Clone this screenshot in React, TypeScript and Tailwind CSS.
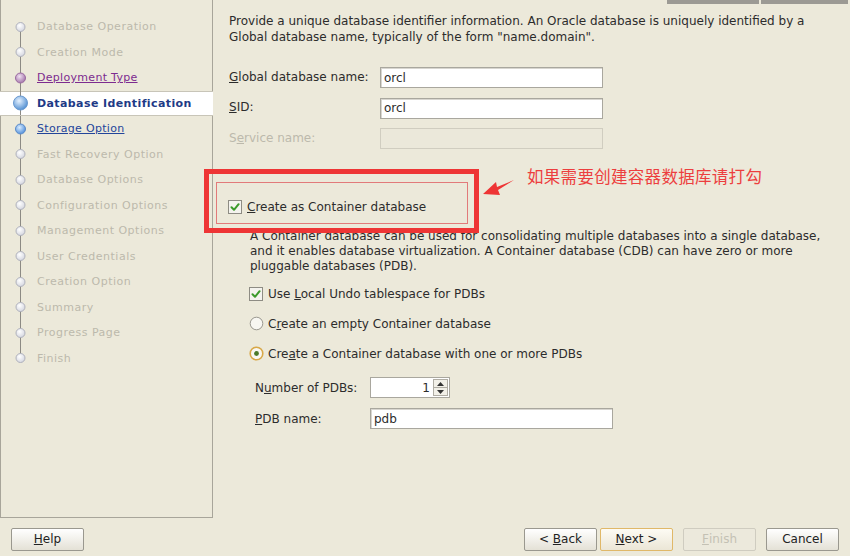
import React from "react";

const steps: { label: string; state: "done" | "current" | "next" | "off" }[] = [
  { label: "Database Operation", state: "off" },
  { label: "Creation Mode", state: "off" },
  { label: "Deployment Type", state: "done" },
  { label: "Database Identification", state: "current" },
  { label: "Storage Option", state: "next" },
  { label: "Fast Recovery Option", state: "off" },
  { label: "Database Options", state: "off" },
  { label: "Configuration Options", state: "off" },
  { label: "Management Options", state: "off" },
  { label: "User Credentials", state: "off" },
  { label: "Creation Option", state: "off" },
  { label: "Summary", state: "off" },
  { label: "Progress Page", state: "off" },
  { label: "Finish", state: "off" },
];

function Marker({ state, first, last, h }: { state: string; first: boolean; last: boolean; h: number }) {
  const cy = h / 2;
  const cfg =
    state === "current"
      ? { r: 7, a: "#e6f2ff", b: "#4a8ad0", s: "#6a9ad0" }
      : state === "next"
      ? { r: 5, a: "#d8ecff", b: "#4a8ad8", s: "#5a8ac8" }
      : state === "done"
      ? { r: 5, a: "#f0e0f0", b: "#a070a8", s: "#9a6aa0" }
      : { r: 4.5, a: "#ffffff", b: "#d2d4de", s: "#b0b2bc" };
  const gid = `g-${state}`;
  return (
    <svg width="37" height={h} viewBox={`0 0 37 ${h}`} className="block shrink-0">
      <defs>
        <radialGradient id={gid} cx="0.4" cy="0.35" r="0.7">
          <stop offset="0" stopColor={cfg.a} />
          <stop offset="1" stopColor={cfg.b} />
        </radialGradient>
      </defs>
      <line x1="20.5" x2="20.5" y1={first ? cy : -2} y2={last ? cy : h + 2} stroke="#8c8a84" strokeWidth="1" />
      <circle cx="20.5" cy={cy} r={cfg.r} fill={`url(#${gid})`} stroke={cfg.s} strokeWidth="1" />
    </svg>
  );
}

function Step({ label, state, first, last }: { label: string; state: string; first: boolean; last: boolean }) {
  const cur = state === "current";
  const textCls =
    state === "current"
      ? "font-bold text-[#1e3a86] tracking-[0.4px]"
      : state === "done"
      ? "underline text-[#7d2b8f] tracking-[0.3px]"
      : state === "next"
      ? "underline text-[#23459a] tracking-[0.3px]"
      : "text-[#bcb9ac] tracking-[0.5px]";
  return (
    <div
      className={`flex items-center h-[25.5px] -ml-[1px] ${
        cur ? "bg-white border-y border-[#c8c5b8] -mr-[1px]" : ""
      }`}
    >
      <Marker state={state} first={first} last={last} h={cur ? 24 : 26} />
      <span className={`text-[11px] leading-none ${textCls}`}>{label}</span>
    </div>
  );
}

function TextBox({ value, disabled, w = "w-[223px]" }: { value?: string; disabled?: boolean; w?: string }) {
  return (
    <div
      className={`${w} h-[21px] flex items-center px-[3px] text-[12px] border ${
        disabled
          ? "bg-[#ebe8da] border-[#d0cdc0]"
          : "bg-white border-[#a9a79e] shadow-[inset_1px_1px_0_#d8d6d0]"
      }`}
    >
      {value}
    </div>
  );
}

function Check() {
  return (
    <div className="w-[14px] h-[14px] border border-[#8e8c84] bg-[#f4f3ee] flex items-center justify-center shrink-0">
      <svg width="10" height="10" viewBox="0 0 10 10">
        <path d="M1.5 5.2 L4 7.8 L8.6 2.2" fill="none" stroke="#3b9a2a" strokeWidth="2" strokeLinecap="round" strokeLinejoin="round" />
      </svg>
    </div>
  );
}

function Radio({ on }: { on?: boolean }) {
  return (
    <svg width="15" height="15" viewBox="0 0 15 15" className="shrink-0">
      <circle cx="7.5" cy="7.5" r="6.3" fill="#f8f7f2" stroke={on ? "#d8a848" : "#9a9890"} strokeWidth={on ? 1.6 : 1} />
      {on && <circle cx="7.5" cy="7.5" r="2.4" fill="#4a7a2a" />}
    </svg>
  );
}

function Btn({ children, primary, disabled, w = "w-[73px]" }: { children: React.ReactNode; primary?: boolean; disabled?: boolean; w?: string }) {
  return (
    <div
      className={`${w} h-[23px] flex items-center justify-center text-[12px] rounded-[2px] border ${
        disabled
          ? "border-[#cfccc0] text-[#c4c1b4] bg-[#ece9dc]"
          : primary
          ? "border-[#e0b868] bg-gradient-to-b from-[#fdfbf4] to-[#ebe6d6] text-[#222]"
          : "border-[#9a988f] bg-gradient-to-b from-[#ffffff] to-[#e4e1d6] text-[#222]"
      }`}
    >
      {children}
    </div>
  );
}

export default function App() {
  return (
    <div
      className="relative w-[850px] h-[556px] overflow-hidden bg-[#ece9da] text-[#2c2c2c]"
      style={{ fontFamily: '"DejaVu Sans", Verdana, sans-serif' }}
    >
      <div className="flex h-[518px]">
        <div className="w-[213px] h-full border-l border-r border-b border-[#a8a59a] flex flex-col pt-[14px] shrink-0">
          {steps.map((s, i) => (
            <Step key={s.label} label={s.label} state={s.state} first={i === 0} last={i === steps.length - 1} />
          ))}
        </div>
        <div className="flex-1 flex flex-col text-[12px]">
          <div className="flex h-[4px] justify-end">
            <div className="w-[92px] bg-[#9c9a94] mr-[2px]" />
            <div className="w-[87px] bg-[#9c9a94] mr-[2px]" />
          </div>
          <div className="pl-[16px] pt-[9px] leading-[16px]">
            <p>Provide a unique database identifier information. An Oracle database is uniquely identified by a</p>
            <p>Global database name, typically of the form "name.domain".</p>
          </div>
          <div className="pl-[16px] mt-[22px] flex flex-col gap-[9.5px]">
            <div className="flex items-center h-[21px]">
              <span className="w-[151px] -mt-[2px]">
                <u>G</u>lobal database name:
              </span>
              <TextBox value="orcl" />
            </div>
            <div className="flex items-center h-[21px]">
              <span className="w-[151px] -mt-[2px]">
                <u>S</u>ID:
              </span>
              <TextBox value="orcl" />
            </div>
            <div className="flex items-center h-[21px]">
              <span className="w-[151px] -mt-[2px] text-[#bcb9ac]">
                S<u>e</u>rvice name:
              </span>
              <TextBox disabled />
            </div>
          </div>
          <div className="pl-[15px] mt-[50px] h-[16px] flex items-center gap-[5px]">
            <Check />
            <span>
              <u>C</u>reate as Container database
            </span>
          </div>
          <div className="pl-[37px] mt-[13.5px] leading-[15px]">
            <p>A Container database can be used for consolidating multiple databases into a single database,</p>
            <p>and it enables database virtualization. A Container database (CDB) can have zero or more</p>
            <p>pluggable databases (PDB).</p>
          </div>
          <div className="pl-[36px] mt-[12.5px] flex flex-col gap-[13.75px]">
            <div className="flex items-center h-[16px] gap-[5px]">
              <Check />
              <span>
                Use <u>L</u>ocal Undo tablespace for PDBs
              </span>
            </div>
            <div className="flex items-center h-[16px] gap-[4px]">
              <Radio />
              <span>
                C<u>r</u>eate an empty Container database
              </span>
            </div>
            <div className="flex items-center h-[16px] gap-[4px]">
              <Radio on />
              <span>
                Cre<u>a</u>te a Container database with one or more PDBs
              </span>
            </div>
          </div>
          <div className="pl-[42px] mt-[15.5px] flex flex-col gap-[10px]">
            <div className="flex items-center h-[21px]">
              <span className="w-[115px]">
                N<u>u</u>mber of PDBs:
              </span>
              <div className="w-[80px] h-[21px] flex items-center bg-white border border-[#a9a79e]">
                <span className="flex-1 text-right pr-[3px]">1</span>
                <div className="w-[15px] h-[17px] mr-[1px] flex flex-col border border-[#b0ada4] bg-[#f2f0e8]">
                  <div className="flex-1 flex items-center justify-center border-b border-[#b0ada4]">
                    <svg width="7" height="4" viewBox="0 0 7 4"><path d="M0 4 L3.5 0 L7 4 Z" fill="#333" /></svg>
                  </div>
                  <div className="flex-1 flex items-center justify-center">
                    <svg width="7" height="4" viewBox="0 0 7 4"><path d="M0 0 L3.5 4 L7 0 Z" fill="#333" /></svg>
                  </div>
                </div>
              </div>
            </div>
            <div className="flex items-center h-[21px]">
              <span className="w-[115px]">
                <u>P</u>DB name:
              </span>
              <TextBox value="pdb" w="w-[243px]" />
            </div>
          </div>
        </div>
      </div>
      <div className="flex items-center h-[38px] px-[11px] pt-[4px]">
        <Btn>
          <u>H</u>elp
        </Btn>
        <div className="flex-1" />
        <div className="flex gap-[3px] mr-[7px]">
          <Btn>
            &lt;&nbsp;<u>B</u>ack
          </Btn>
          <Btn primary>
            <u>N</u>ext &gt;
          </Btn>
        </div>
        <div className="flex gap-[10px] ml-[3px]">
          <Btn disabled>
            <u>F</u>inish
          </Btn>
          <Btn>Cancel</Btn>
        </div>
      </div>

      {/* annotation overlay */}
      <div className="absolute left-[204px] top-[169px] w-[275px] h-[64px] border-[5px] border-[#ee3535]" />
      <div className="absolute left-[216px] top-[182px] w-[252px] h-[42px] border border-[#e27a7a]" />
      <svg className="absolute left-[480px] top-[176px]" width="40" height="24" viewBox="0 0 40 24">
        <path d="M3 18 L16 6 L17 11 L34 4 L18 14 L20 19 Z" fill="#ee3535" />
      </svg>
      <div
        className="absolute left-[527px] top-[165px] text-[16.5px] leading-[22px] text-[#ec3e3e] tracking-[0.3px]"
        style={{ fontFamily: '"Noto Sans CJK SC", sans-serif' }}
      >
        如果需要创建容器数据库请打勾
      </div>
    </div>
  );
}
